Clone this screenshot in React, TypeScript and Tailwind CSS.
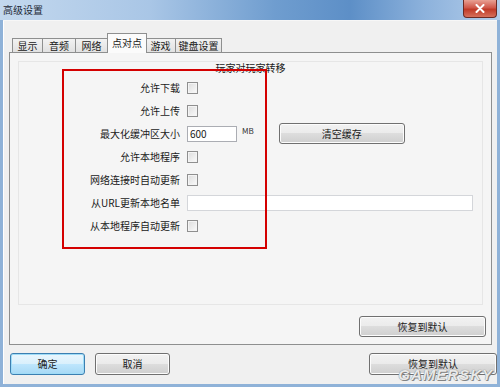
import React from 'react';

const font = "font-['Noto_Sans_CJK_SC','Microsoft_YaHei',sans-serif]";

const btn =
  'flex items-center justify-center rounded-[3px] border border-[#707070] bg-[linear-gradient(#f2f2f2_0%,#ebebeb_49%,#dddddd_50%,#cfcfcf_100%)] text-[10px] leading-[12px] text-[#1a1a1a] shadow-[inset_0_0_0_1px_#fcfcfc]';

const Checkbox = () => (
  <div className="ml-[7px] h-[12px] w-[11px] border border-[#8f8f8f] bg-[linear-gradient(135deg,#dcdcdc,#fbfbfb)] shadow-[inset_0_0_0_1px_#f4f4f4]" />
);

type RowProps = { label: string; children: React.ReactNode };

const Row = ({ label, children }: RowProps) => (
  <div className="flex h-[23px] items-center">
    <div className="w-[161px] text-right text-[10px] leading-[12px] text-[#1a1a1a]">{label}</div>
    {children}
  </div>
);

const tabs = ['显示', '音频', '网络', '点对点', '游戏', '键盘设置'];
const tabWidths = ['w-[31px]', 'w-[33px]', 'w-[32px]', 'w-[40px]', 'w-[30px]', 'w-[46px]'];

export default function App() {
  return (
    <div className={`relative flex h-[387px] w-[500px] flex-col overflow-hidden bg-[#8fb2d8] ${font}`}>
      {/* title bar */}
      <div className="flex h-[20px] items-start justify-between bg-[linear-gradient(90deg,#c3d8ee_0%,#a9c6e6_30%,#6f9dcf_55%,#5d8fc7_70%,#8db2dc_85%,#b3cdea_100%)] pr-[3px]">
        <div className="pl-[3px] pt-[3px] text-[10px] leading-[13px] text-[#1e2a38]">高级设置</div>
        <div className="flex h-[18px] w-[34px] items-center justify-center rounded-b-[4px] border border-t-0 border-[#6b2a24] bg-[linear-gradient(#e8a093_0%,#d0584a_45%,#c03a28_55%,#d6705c_100%)]">
          <svg width="10" height="9" viewBox="0 0 10 9">
            <path d="M1.5 1 L8.5 8 M8.5 1 L1.5 8" stroke="#fff" strokeWidth="2" strokeLinecap="round" />
          </svg>
        </div>
      </div>

      {/* client area */}
      <div className="mx-[3px] mb-[3px] flex flex-1 flex-col border-t border-[#f7f7f7] bg-[#f0f0f0] shadow-[inset_1px_0_0_#ffffff]">
        {/* tabs */}
        <div className="ml-[9px] mt-[12px] flex h-[19px] items-end">
          {tabs.map((t, i) =>
            i === 3 ? (
              <div
                key={t}
                className={`relative z-10 -mb-px mx-[-1px] flex h-[20px] ${tabWidths[i]} items-start justify-center border border-b-0 border-[#8e8f8f] bg-[#fbfbfb] pt-[3px] text-[10px] leading-[12px] text-[#1a1a1a]`}
              >
                {t}
              </div>
            ) : (
              <div
                key={t}
                className={`flex h-[14px] ${tabWidths[i]} items-center justify-center border border-b-0 border-l-0 border-[#8e8f8f] bg-[linear-gradient(#f2f2f2,#e1e1e1)] text-[10px] leading-[12px] text-[#1a1a1a] first:border-l`}
              >
                {t}
              </div>
            )
          )}
        </div>

        {/* tab panel */}
        <div className="ml-[6px] flex h-[293px] w-[483px] flex-col border border-[#8e8f8f] bg-[#f5f5f5]">
          <div className="mx-[8px] mt-[8px] h-[244px] border border-[#e6e6e6]">
            <div className="text-center text-[10px] leading-[12px] text-[#1a1a1a]">玩家对玩家转移</div>
            <div className="mt-[2px] flex flex-col">
              <Row label="允许下载">
                <Checkbox />
              </Row>
              <Row label="允许上传">
                <Checkbox />
              </Row>
              <Row label="最大化缓冲区大小">
                <div className="ml-[7px] flex h-[16px] w-[50px] items-center border border-[#abadb3] bg-white pl-[2px] text-[10px] text-[#1a1a1a]">
                  600
                </div>
                <div className="ml-[5px] -mt-[5px] text-[8px] text-[#333]">MB</div>
                <div className={`${btn} ml-[25px] h-[21px] w-[126px]`}>清空缓存</div>
              </Row>
              <Row label="允许本地程序">
                <Checkbox />
              </Row>
              <Row label="网络连接时自动更新">
                <Checkbox />
              </Row>
              <Row label="从URL更新本地名单">
                <div className="ml-[7px] h-[16px] w-[286px] border border-[#d4d6da] bg-white" />
              </Row>
              <Row label="从本地程序自动更新">
                <Checkbox />
              </Row>
            </div>
          </div>
          <div className="flex flex-1 items-end justify-end pb-[7px] pr-[5px]">
            <div className={`${btn} h-[21px] w-[127px]`}>恢复到默认</div>
          </div>
        </div>

        {/* bottom buttons */}
        <div className="mt-[8px] flex items-center pl-[7px] pr-[0px]">
          <div className="flex h-[22px] w-[75px] items-center justify-center rounded-[3px] border border-[#3c7fb1] bg-[linear-gradient(#eaf6fd_0%,#d9f0fc_49%,#bee6fd_50%,#a7d9f5_100%)] text-[10px] leading-[12px] text-[#1a1a1a] shadow-[inset_0_0_0_1px_#9fdcf7]">
            确定
          </div>
          <div className={`${btn} ml-[10px] h-[22px] w-[75px]`}>取消</div>
          <div className={`${btn} ml-auto h-[22px] w-[128px]`}>恢复到默认</div>
        </div>
      </div>

      {/* annotation overlay */}
      <div className="absolute left-[62px] top-[69px] h-[180px] w-[205px] border-2 border-[#d40000]" />

      {/* watermark */}
      <div className="absolute bottom-[4px] right-[7px] font-['Liberation_Sans',sans-serif] text-[15px] font-bold italic leading-[16px] tracking-[1px] text-[#e8e8e8] [text-shadow:0_0_1px_#666,1px_1px_0_#888]">
        GAMERSKY
      </div>
    </div>
  );
}
